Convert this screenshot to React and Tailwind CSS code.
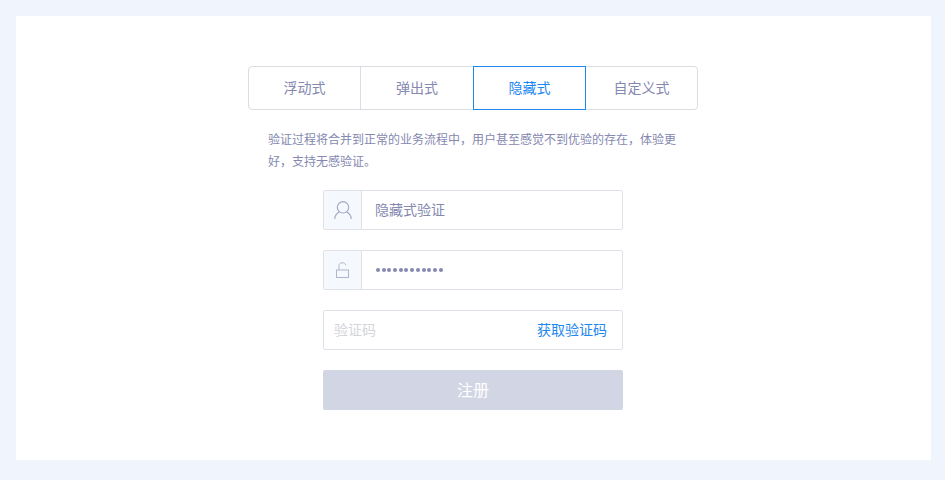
import React from 'react';

const tabs = [
  { label: '浮动式', cls: 'w-[112px] border-r border-[#dcdde3]' },
  { label: '弹出式', cls: 'w-[112px]' },
  { label: '隐藏式', cls: '-my-px w-[113px] border border-[#1e88f0] text-[#1e88f0]' },
  { label: '自定义式', cls: 'w-[111px]' },
];

function UserIcon() {
  return (
    <svg width="18" height="18" viewBox="0 0 18 18" fill="none" stroke="#a3a9c6" strokeWidth="1.1">
      <circle cx="9" cy="6.3" r="5.7" />
      <path d="M.8 18c0-3.6 2.2-6 4.6-7.1M17.2 18c0-3.6-2.2-6-4.6-7.1" />
    </svg>
  );
}

function LockIcon() {
  return (
    <svg className="ml-px" width="14" height="16" viewBox="0 0 14 16" fill="none" stroke="#b0b5cd" strokeWidth="1">
      <rect x=".5" y="8" width="12" height="7.5" />
      <path d="M3 8V3.5C3 1.8 4.5.8 6.3.8s3.2.9 3.4 2.4" />
    </svg>
  );
}

function Field({ icon, children }) {
  return (
    <div className="flex h-10 w-[300px] rounded-[2px] border border-[#e0e2ea] bg-white">
      <div className="flex w-[38px] shrink-0 items-center justify-center border-r border-[#e0e2ea] bg-[#f5f8fc]">{icon}</div>
      <div className="flex flex-1 items-center pl-[13px] text-sm text-[#8588b0]">{children}</div>
    </div>
  );
}

export default function App() {
  return (
    <div className="h-[480px] w-[945px] bg-[#f0f4fd] pl-4 pt-4 font-['Inter','Noto_Sans_CJK_SC',sans-serif]">
      <div className="flex h-[444px] w-[915px] flex-col items-center bg-white pr-px pt-[50px]">
        <div className="flex h-11 w-[450px] rounded-[4px] border border-[#dcdde3] text-sm text-[#8588b0]">
          {tabs.map(t => (
            <div key={t.label} className={`flex items-center justify-center ${t.cls}`}>
              {t.label}
            </div>
          ))}
        </div>
        <p className="mt-[19px] w-[410px] text-xs leading-[22px] text-[#8588b0]">
          验证过程将合并到正常的业务流程中，用户甚至感觉不到优验的存在，体验更好，支持无感验证。
        </p>
        <div className="mt-[17px] flex flex-col gap-5">
          <Field icon={<UserIcon />}>隐藏式验证</Field>
          <Field icon={<LockIcon />}>
            <span className="ml-px flex gap-[1.7px]">
              {Array.from({ length: 12 }).map((_, i) => (
                <span key={i} className="h-1 w-1 rounded-full bg-[#8588b0]" />
              ))}
            </span>
          </Field>
          <div className="flex h-10 w-[300px] items-center justify-between rounded-[2px] border border-[#e0e2ea] bg-white pl-[10px] pr-[15px] text-sm">
            <span className="text-[#d4d4da]">验证码</span>
            <span className="text-[#1e88f0]">获取验证码</span>
          </div>
          <div className="flex h-10 w-[300px] items-center justify-center rounded-[2px] bg-[#d2d5e3] text-base text-white">注册</div>
        </div>
      </div>
    </div>
  );
}
